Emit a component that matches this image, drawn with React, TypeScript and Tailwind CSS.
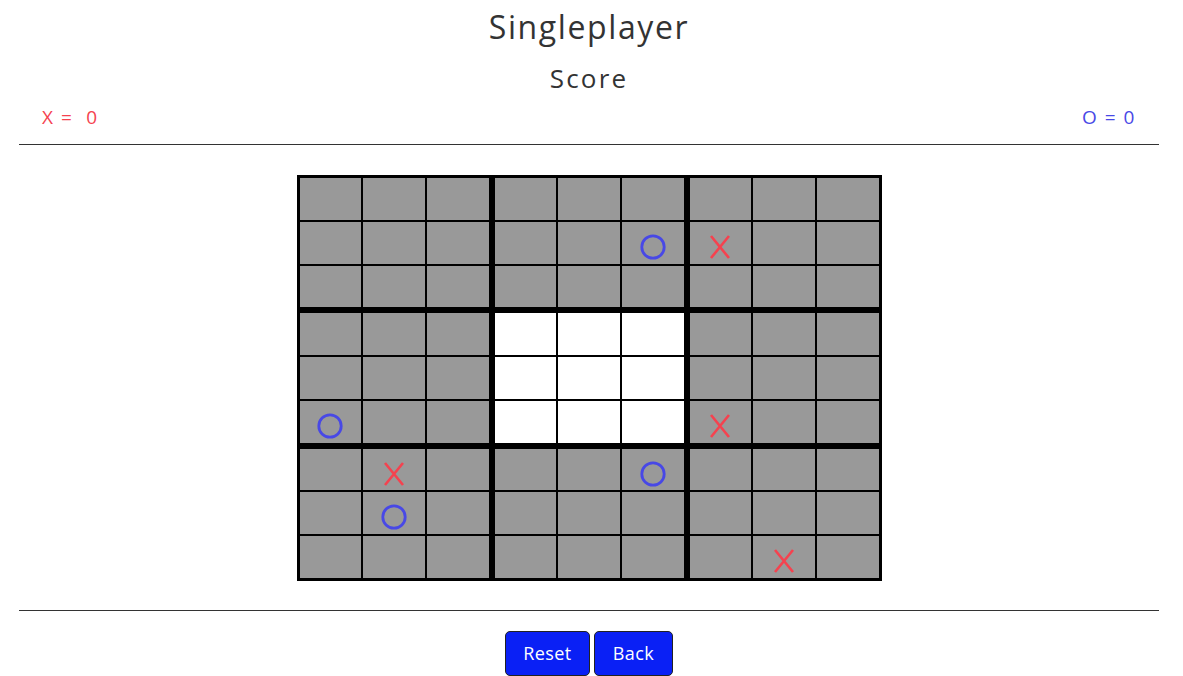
import React from 'react';

type Mark = 'X' | 'O' | null;

// marks by [row][col] on the 9x9 board
const marks: Record<string, Mark> = {
  '1-5': 'O',
  '1-6': 'X',
  '5-0': 'O',
  '5-6': 'X',
  '6-1': 'X',
  '6-5': 'O',
  '7-1': 'O',
  '8-7': 'X',
};

function XMark() {
  return (
    <svg width="22" height="24" viewBox="0 0 22 24" className="mt-[8px]">
      <path d="M2 1 L20 23 M20 1 L2 23" stroke="#f5424f" strokeWidth="2.6" fill="none" />
    </svg>
  );
}

function OMark() {
  return (
    <svg width="26" height="26" viewBox="0 0 26 26" className="mt-[8px]">
      <circle cx="13" cy="13" r="11.2" stroke="#4848e6" strokeWidth="2.8" fill="none" />
    </svg>
  );
}

function Cell({ row, col, center }: { row: number; col: number; center: boolean }) {
  const m = marks[`${row}-${col}`];
  return (
    <div className={`flex items-center justify-center ${center ? 'bg-white' : 'bg-[#999999]'}`}>
      {m === 'X' && <XMark />}
      {m === 'O' && <OMark />}
    </div>
  );
}

function Block({ br, bc }: { br: number; bc: number }) {
  const cells = [];
  for (let r = 0; r < 3; r++) {
    for (let c = 0; c < 3; c++) {
      cells.push(
        <Cell key={`${r}-${c}`} row={br * 3 + r} col={bc * 3 + c} center={br === 1 && bc === 1} />
      );
    }
  }
  return <div className="grid grid-cols-3 grid-rows-3 gap-[2px] bg-black">{cells}</div>;
}

export default function App() {
  const blocks = [];
  for (let br = 0; br < 3; br++) {
    for (let bc = 0; bc < 3; bc++) {
      blocks.push(<Block key={`${br}-${bc}`} br={br} bc={bc} />);
    }
  }

  return (
    <div className="min-h-screen bg-white text-[#333333] font-['Open_Sans',sans-serif] ml-[19px] mr-[24px]">
      <h1 className="text-center text-[32px] leading-[40px] pt-[7px] tracking-[1.6px]">Singleplayer</h1>
      <h2 className="text-center text-[26px] leading-[32px] mt-[15px] tracking-[2.2px]">Score</h2>
      <div className="flex justify-between px-[23px] text-[19px] leading-[24px] mt-[11px] tracking-[1.5px]">
        <span className="text-[#f5424f]">X =&nbsp; 0</span>
        <span className="text-[#4848e6]">O = 0</span>
      </div>
      <div className="border-t border-[#333333] mt-[15px]" />

      <div className="flex justify-center mt-[30px]">
        <div className="w-[585px] h-[406px] bg-black p-[3px] grid grid-cols-3 grid-rows-3 gap-[6px]">
          {blocks}
        </div>
      </div>

      <div className="border-t border-[#333333] mt-[29px]" />

      <div className="flex justify-center gap-[4px] mt-[20px]">
        <button className="h-[45px] w-[85px] rounded-[5px] border border-[#222] bg-[#0a20f5] text-white text-[18px] font-medium tracking-[0.4px]">
          Reset
        </button>
        <button className="h-[45px] w-[79px] rounded-[5px] border border-[#222] bg-[#0a20f5] text-white text-[18px] font-medium tracking-[0.4px]">
          Back
        </button>
      </div>
    </div>
  );
}
